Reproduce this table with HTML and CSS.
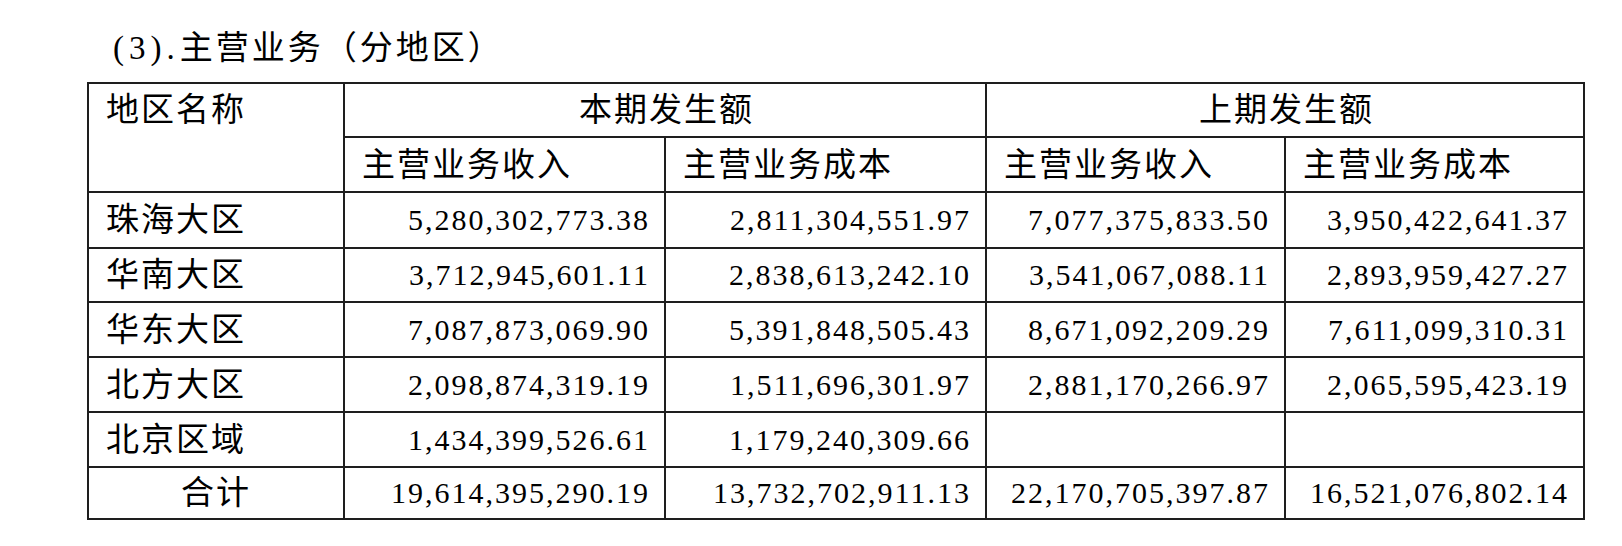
FILE: index.html
```html
<!DOCTYPE html>
<html lang="zh-CN">
<head>
<meta charset="utf-8">
<title>主营业务（分地区）</title>
<link rel="stylesheet" href="styles.css">
</head>
<body>
<div class="page">
  <h1 class="title"><span class="title-num">(3).</span>主营业务（分地区）</h1>
  <table class="report">
    <colgroup>
      <col class="c-name">
      <col class="c-cur">
      <col class="c-cur">
      <col class="c-prev">
      <col class="c-prev">
    </colgroup>
    <thead>
      <tr class="row-h1">
        <th class="name-head" rowspan="2">地区名称</th>
        <th class="group" colspan="2">本期发生额</th>
        <th class="group" colspan="2">上期发生额</th>
      </tr>
      <tr class="row-h2">
        <th class="sub">主营业务收入</th>
        <th class="sub">主营业务成本</th>
        <th class="sub">主营业务收入</th>
        <th class="sub">主营业务成本</th>
      </tr>
    </thead>
    <tbody>
      <tr class="row-a">
        <td class="name">珠海大区</td>
        <td class="num">5,280,302,773.38</td>
        <td class="num">2,811,304,551.97</td>
        <td class="num">7,077,375,833.50</td>
        <td class="num">3,950,422,641.37</td>
      </tr>
      <tr class="row-b">
        <td class="name">华南大区</td>
        <td class="num">3,712,945,601.11</td>
        <td class="num">2,838,613,242.10</td>
        <td class="num">3,541,067,088.11</td>
        <td class="num">2,893,959,427.27</td>
      </tr>
      <tr class="row-c">
        <td class="name">华东大区</td>
        <td class="num">7,087,873,069.90</td>
        <td class="num">5,391,848,505.43</td>
        <td class="num">8,671,092,209.29</td>
        <td class="num">7,611,099,310.31</td>
      </tr>
      <tr class="row-c">
        <td class="name">北方大区</td>
        <td class="num">2,098,874,319.19</td>
        <td class="num">1,511,696,301.97</td>
        <td class="num">2,881,170,266.97</td>
        <td class="num">2,065,595,423.19</td>
      </tr>
      <tr class="row-c">
        <td class="name">北京区域</td>
        <td class="num">1,434,399,526.61</td>
        <td class="num">1,179,240,309.66</td>
        <td class="num"></td>
        <td class="num"></td>
      </tr>
      <tr class="row-total">
        <td class="name total">合计</td>
        <td class="num">19,614,395,290.19</td>
        <td class="num">13,732,702,911.13</td>
        <td class="num">22,170,705,397.87</td>
        <td class="num">16,521,076,802.14</td>
      </tr>
    </tbody>
  </table>
</div>
</body>
</html>
```

FILE: styles.css
```css
html, body {
  margin: 0;
  padding: 0;
  background: #ffffff;
}

body {
  color: #000000;
  font-family: "Liberation Serif", "Noto Sans CJK SC", serif;
}

.page {
  padding: 28px 0 0 87px;
}

.title {
  margin: 0 0 14px 0;
  padding-left: 26px;
  font-size: 33px;
  line-height: 40px;
  font-weight: normal;
  letter-spacing: 3px;
}

.title-num {
  letter-spacing: 5px;
}

.report {
  width: 1497px;
  table-layout: fixed;
  border-collapse: collapse;
  font-size: 33px;
}

.c-name { width: 256px; }
.c-cur { width: 321px; }
.c-prev { width: 299px; }

.report th,
.report td {
  border: 2px solid #1e1e1e;
  padding: 0 14px 0 17px;
  font-weight: normal;
  line-height: 40px;
  letter-spacing: 2px;
  white-space: nowrap;
  vertical-align: middle;
}

.row-h1 { height: 54px; }
.row-h2 { height: 55px; }
.row-a { height: 56px; }
.row-b { height: 54px; }
.row-c { height: 55px; }
.row-total { height: 52px; }

.report .name-head {
  text-align: left;
  vertical-align: top;
  line-height: 52px;
}

.report .group {
  text-align: center;
}

.report .sub {
  text-align: left;
}

.report .name {
  text-align: left;
}

.report .name.total {
  text-align: center;
  padding: 0;
}

.report .num {
  text-align: right;
  font-size: 30px;
}
```
